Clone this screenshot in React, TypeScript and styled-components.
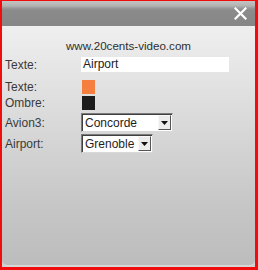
import React from "react";
import styled, { createGlobalStyle } from "styled-components";

const Global = createGlobalStyle`
  html, body { margin: 0; padding: 0; background: #fff; }
  body { font-family: "Liberation Sans", Arial, sans-serif; }
`;

const Frame = styled.div`
  box-sizing: border-box;
  width: 258px;
  height: 270px;
  border-style: solid;
  border-color: #f20d0d;
  border-width: 1px 3px 3px 2px;
  display: flex;
  flex-direction: column;
  background: #d0d0d0;
`;

const Header = styled.div`
  height: 25px;
  flex: none;
  display: flex;
  justify-content: flex-end;
  align-items: center;
  padding-right: 8px;
  background: linear-gradient(#c4c4c4 0px, #b2b2b2 5px, #9a9a9a 7px, #8b8b8b 9px, #868686 100%);
`;

const Body = styled.div`
  flex: 1;
  display: flex;
  flex-direction: column;
  padding: 13px 0 0 3px;
  background: linear-gradient(#efefef 0%, #dcdcdc 35%, #c6c6c6 75%, #bcbcbc 100%);
  border-radius: 0 0 5px 5px;
  box-shadow: inset 0 -2px 0 #d6d6d6;
`;

const Title = styled.div`
  text-align: center;
  font-size: 11.6px;
  line-height: 14px;
  color: #2e2e2e;
  margin-left: -3px;
`;

const Row = styled.div<{ $top: number; $h: number }>`
  display: grid;
  grid-template-columns: 76px auto;
  align-items: center;
  margin-top: ${(p) => p.$top}px;
  height: ${(p) => p.$h}px;
`;

const Label = styled.div`
  font-size: 12px;
  color: #3a3a3a;
`;

const TextBox = styled.div`
  box-sizing: border-box;
  width: 148px;
  height: 15px;
  background: #fff;
  font-size: 12px;
  line-height: 15px;
  padding-left: 2px;
  color: #222;
`;

const Swatch = styled.div<{ $color: string }>`
  width: 13px;
  height: 14px;
  margin-left: 1px;
  background: ${(p) => p.$color};
`;

const Select = styled.div<{ $w: number }>`
  box-sizing: border-box;
  width: ${(p) => p.$w}px;
  height: 19px;
  background: #fff;
  border-style: solid;
  border-width: 1px;
  border-color: #7a7a7a #d8d8d8 #d8d8d8 #7a7a7a;
  box-shadow: inset 1px 1px 0 #404040;
  display: flex;
  align-items: center;
  justify-content: space-between;
  padding: 0 1px 0 3px;
  font-size: 12px;
  color: #1e1e1e;
`;

const Drop = styled.div`
  box-sizing: border-box;
  width: 13px;
  height: 15px;
  background: #ececec;
  border-style: solid;
  border-width: 1px;
  border-color: #f8f8f8 #555 #555 #f8f8f8;
  display: flex;
  align-items: center;
  justify-content: center;
`;

const Arrow = () => (
  <svg width="7" height="4" viewBox="0 0 7 4">
    <path d="M0 0h7L3.5 4z" fill="#111" />
  </svg>
);

const Close = () => (
  <svg width="13" height="13" viewBox="0 0 13 13">
    <path d="M1.5 1.5l10 10M11.5 1.5l-10 10" stroke="#fff" strokeWidth="2.2" strokeLinecap="square" />
  </svg>
);

export default function App() {
  return (
    <>
      <Global />
      <Frame>
        <Header>
          <Close />
        </Header>
        <Body>
          <Title>www.20cents-video.com</Title>
          <Row $top={4} $h={15}>
            <Label>Texte:</Label>
            <TextBox>Airport</TextBox>
          </Row>
          <Row $top={8} $h={14}>
            <Label>Texte:</Label>
            <Swatch $color="#f57f3f" />
          </Row>
          <Row $top={2} $h={14}>
            <Label>Ombre:</Label>
            <Swatch $color="#1c1c1c" />
          </Row>
          <Row $top={3} $h={19}>
            <Label>Avion3:</Label>
            <Select $w={92}>
              Concorde
              <Drop>
                <Arrow />
              </Drop>
            </Select>
          </Row>
          <Row $top={2} $h={19}>
            <Label>Airport:</Label>
            <Select $w={72}>
              Grenoble
              <Drop>
                <Arrow />
              </Drop>
            </Select>
          </Row>
        </Body>
      </Frame>
    </>
  );
}
